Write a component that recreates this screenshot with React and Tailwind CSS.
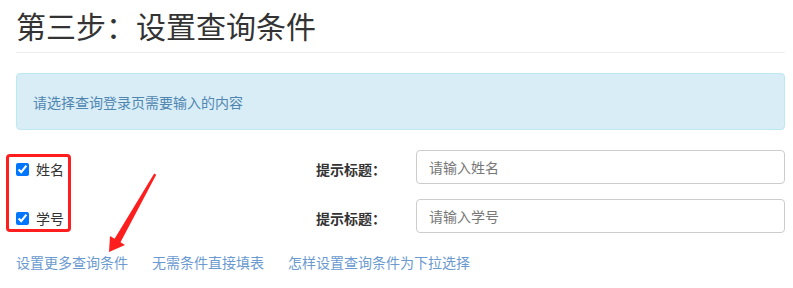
import React from "react";

const font = { fontFamily: '"Noto Sans CJK SC", "Noto Sans", sans-serif' };

function Row({ name, placeholder, className = "" }) {
  return (
    <div className={`flex items-center h-[34px] ${className}`}>
      <label className="w-[300px] pt-[5px] flex items-center gap-[7px] text-[14px] text-[#333]">
        <input type="checkbox" defaultChecked className="w-[13px] h-[13px] m-0" />
        <span>{name}</span>
      </label>
      <div className="w-[100px] pt-[5px] text-[14px] font-bold text-[#333]">提示标题：</div>
      <input
        type="text"
        placeholder={placeholder}
        className="flex-1 h-[34px] px-3 border border-[#ccc] rounded-[4px] text-[14px] placeholder:text-[#777] outline-none"
      />
    </div>
  );
}

export default function App() {
  return (
    <div className="relative w-[793px] h-[288px] bg-white overflow-hidden" style={font}>
      <div className="pl-4 pr-2">
        <h1 className="pt-[8px] pb-[10px] border-b border-[#eee] text-[30px] leading-[34px] font-normal text-[#333]">
          第三步：设置查询条件
        </h1>
        <div className="mt-5 h-[57px] flex items-center pl-4 pt-[1px] bg-[#d9edf7] border border-[#bce8f1] rounded-[4px] text-[14px] text-[#4f86b0]">
          请选择查询登录页需要输入的内容
        </div>
        <div className="mt-5">
          <Row name="姓名" placeholder="请输入姓名" />
          <Row name="学号" placeholder="请输入学号" className="mt-[15px]" />
        </div>
        <div className="mt-[19px] flex gap-6 text-[14px] leading-[20px] text-[#6a9ad0]">
          <a href="#">设置更多查询条件</a>
          <a href="#">无需条件直接填表</a>
          <a href="#">怎样设置查询条件为下拉选择</a>
        </div>
      </div>
      <div className="absolute left-[6px] top-[154px] w-[65px] h-[78px] border-[3px] border-[#ff1e1e] rounded-[4px] pointer-events-none" />
      <svg className="absolute left-0 top-0 pointer-events-none" width="793" height="288">
        <polygon
          points="156.2,174.8 120.5,242.2 125,245 109,252 110,236 114.6,238.8 154.2,173.4"
          fill="#ff1e1e"
        />
      </svg>
    </div>
  );
}
